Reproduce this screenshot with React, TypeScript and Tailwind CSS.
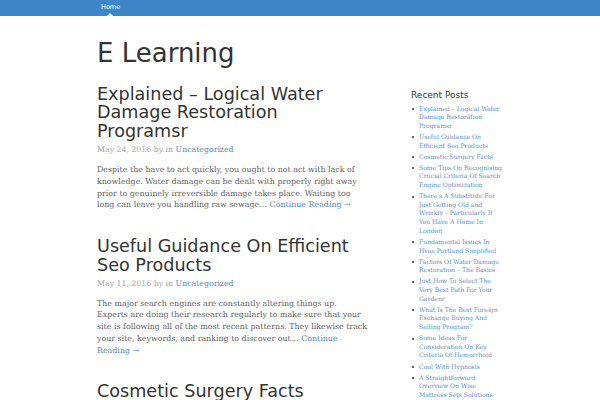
import React from "react";

const sans = { fontFamily: '"DejaVu Sans", sans-serif' };
const serif = { fontFamily: '"DejaVu Serif", serif' };

const recent = [
  "Explained – Logical Water Damage Restoration Programsr",
  "Useful Guidance On Efficient Seo Products",
  "Cosmetic Surgery Facts",
  "Some Tips On Recognising Crucial Criteria Of Search Engine Optimization",
  "There’s A Substitute For Just Getting Old and Wrinkly – Particularly If You Have A Home In London",
  "Fundamental Issues In Hvac Portland Simplified",
  "Factors Of Water Damage Restoration – The Basics",
  "Just How To Select The Very Best Path For Your Gardenr",
  "What Is The Best Foreign Exchange Buying And Selling Program?",
  "Some Ideas For Consideration On Key Criteria Of Hemorrhoid",
  "Cool With Hypnosis",
  "A Straightforward Overview On Wise Mattress Sets Solutions",
];

function Head({ title, date }: { title: string; date?: string }) {
  return (
    <>
      <h2 className="text-[17.6px] leading-[18.8px] text-[#333]" style={sans}>
        {title}
      </h2>
      {date && (
        <div className="mt-[3px] text-[7.8px] leading-[11.7px] text-[#a5a5a5]" style={serif}>
          {date} by in <span className="text-[#4f86bd]">Uncategorized</span>
        </div>
      )}
    </>
  );
}

const bodyCls = "mt-[8.5px] whitespace-nowrap text-[7.9px] leading-[11.7px] text-[#5e5e5e]";
const link = "text-[#4f86bd]";

export default function App() {
  return (
    <div className="w-[600px] h-[400px] overflow-hidden bg-white">
      <nav className="relative h-[16px] bg-[#3d87c8] pl-[101px] flex items-center">
        <span className="text-[6.5px] text-white" style={sans}>
          Home
        </span>
        <span className="absolute left-[107px] bottom-0 w-0 h-0 border-l-[3px] border-r-[3px] border-b-[3px] border-l-transparent border-r-transparent border-b-white" />
      </nav>
      <div className="flex pl-[97px]">
        <main className="w-[272px]">
          <h1 className="mt-[22px] text-[26px] leading-[30px] text-[#333]" style={sans}>
            E Learning
          </h1>
          <div className="mt-[16.5px]">
            <article>
              <Head title="Explained – Logical Water Damage Restoration Programsr" date="May 24, 2016" />
              <p className={bodyCls} style={serif}>
                Despite the have to act quickly, you ought to not act with lack of
                <br />
                knowledge. Water damage can be dealt with properly right away
                <br />
                prior to genuinely irreversible damage takes place. Waiting too
                <br />
                long can leave you handling raw sewage… <span className={link}>Continue Reading →</span>
              </p>
            </article>
            <article className="mt-[26px]">
              <Head title="Useful Guidance On Efficient Seo Products" date="May 11, 2016" />
              <p className={bodyCls} style={serif}>
                The major search engines are constantly altering things up.
                <br />
                Experts are doing their research regularly to make sure that your
                <br />
                site is following all of the most recent patterns. They likewise track
                <br />
                your site, keywords, and ranking to discover out… <span className={link}>Continue</span>
                <br />
                <span className={link}>Reading →</span>
              </p>
            </article>
            <article className="mt-[26px]">
              <Head title="Cosmetic Surgery Facts" />
            </article>
          </div>
        </main>
        <aside className="ml-[42px] w-[94px] pt-[73.5px]">
          <h3 className="text-[9px] leading-[11px] text-[#333]" style={sans}>
            Recent Posts
          </h3>
          <ul className="mt-[4px] flex flex-col gap-[2.4px]">
            {recent.map((r) => (
              <li key={r} className="flex">
                <span className="mt-[3.5px] ml-[1px] w-[2px] h-[2px] rounded-full bg-[#333] shrink-0" />
                <span className="ml-[5px] w-[86px] text-[6.1px] leading-[8.67px] text-[#5b8fc3]" style={serif}>
                  {r}
                </span>
              </li>
            ))}
          </ul>
        </aside>
      </div>
    </div>
  );
}
